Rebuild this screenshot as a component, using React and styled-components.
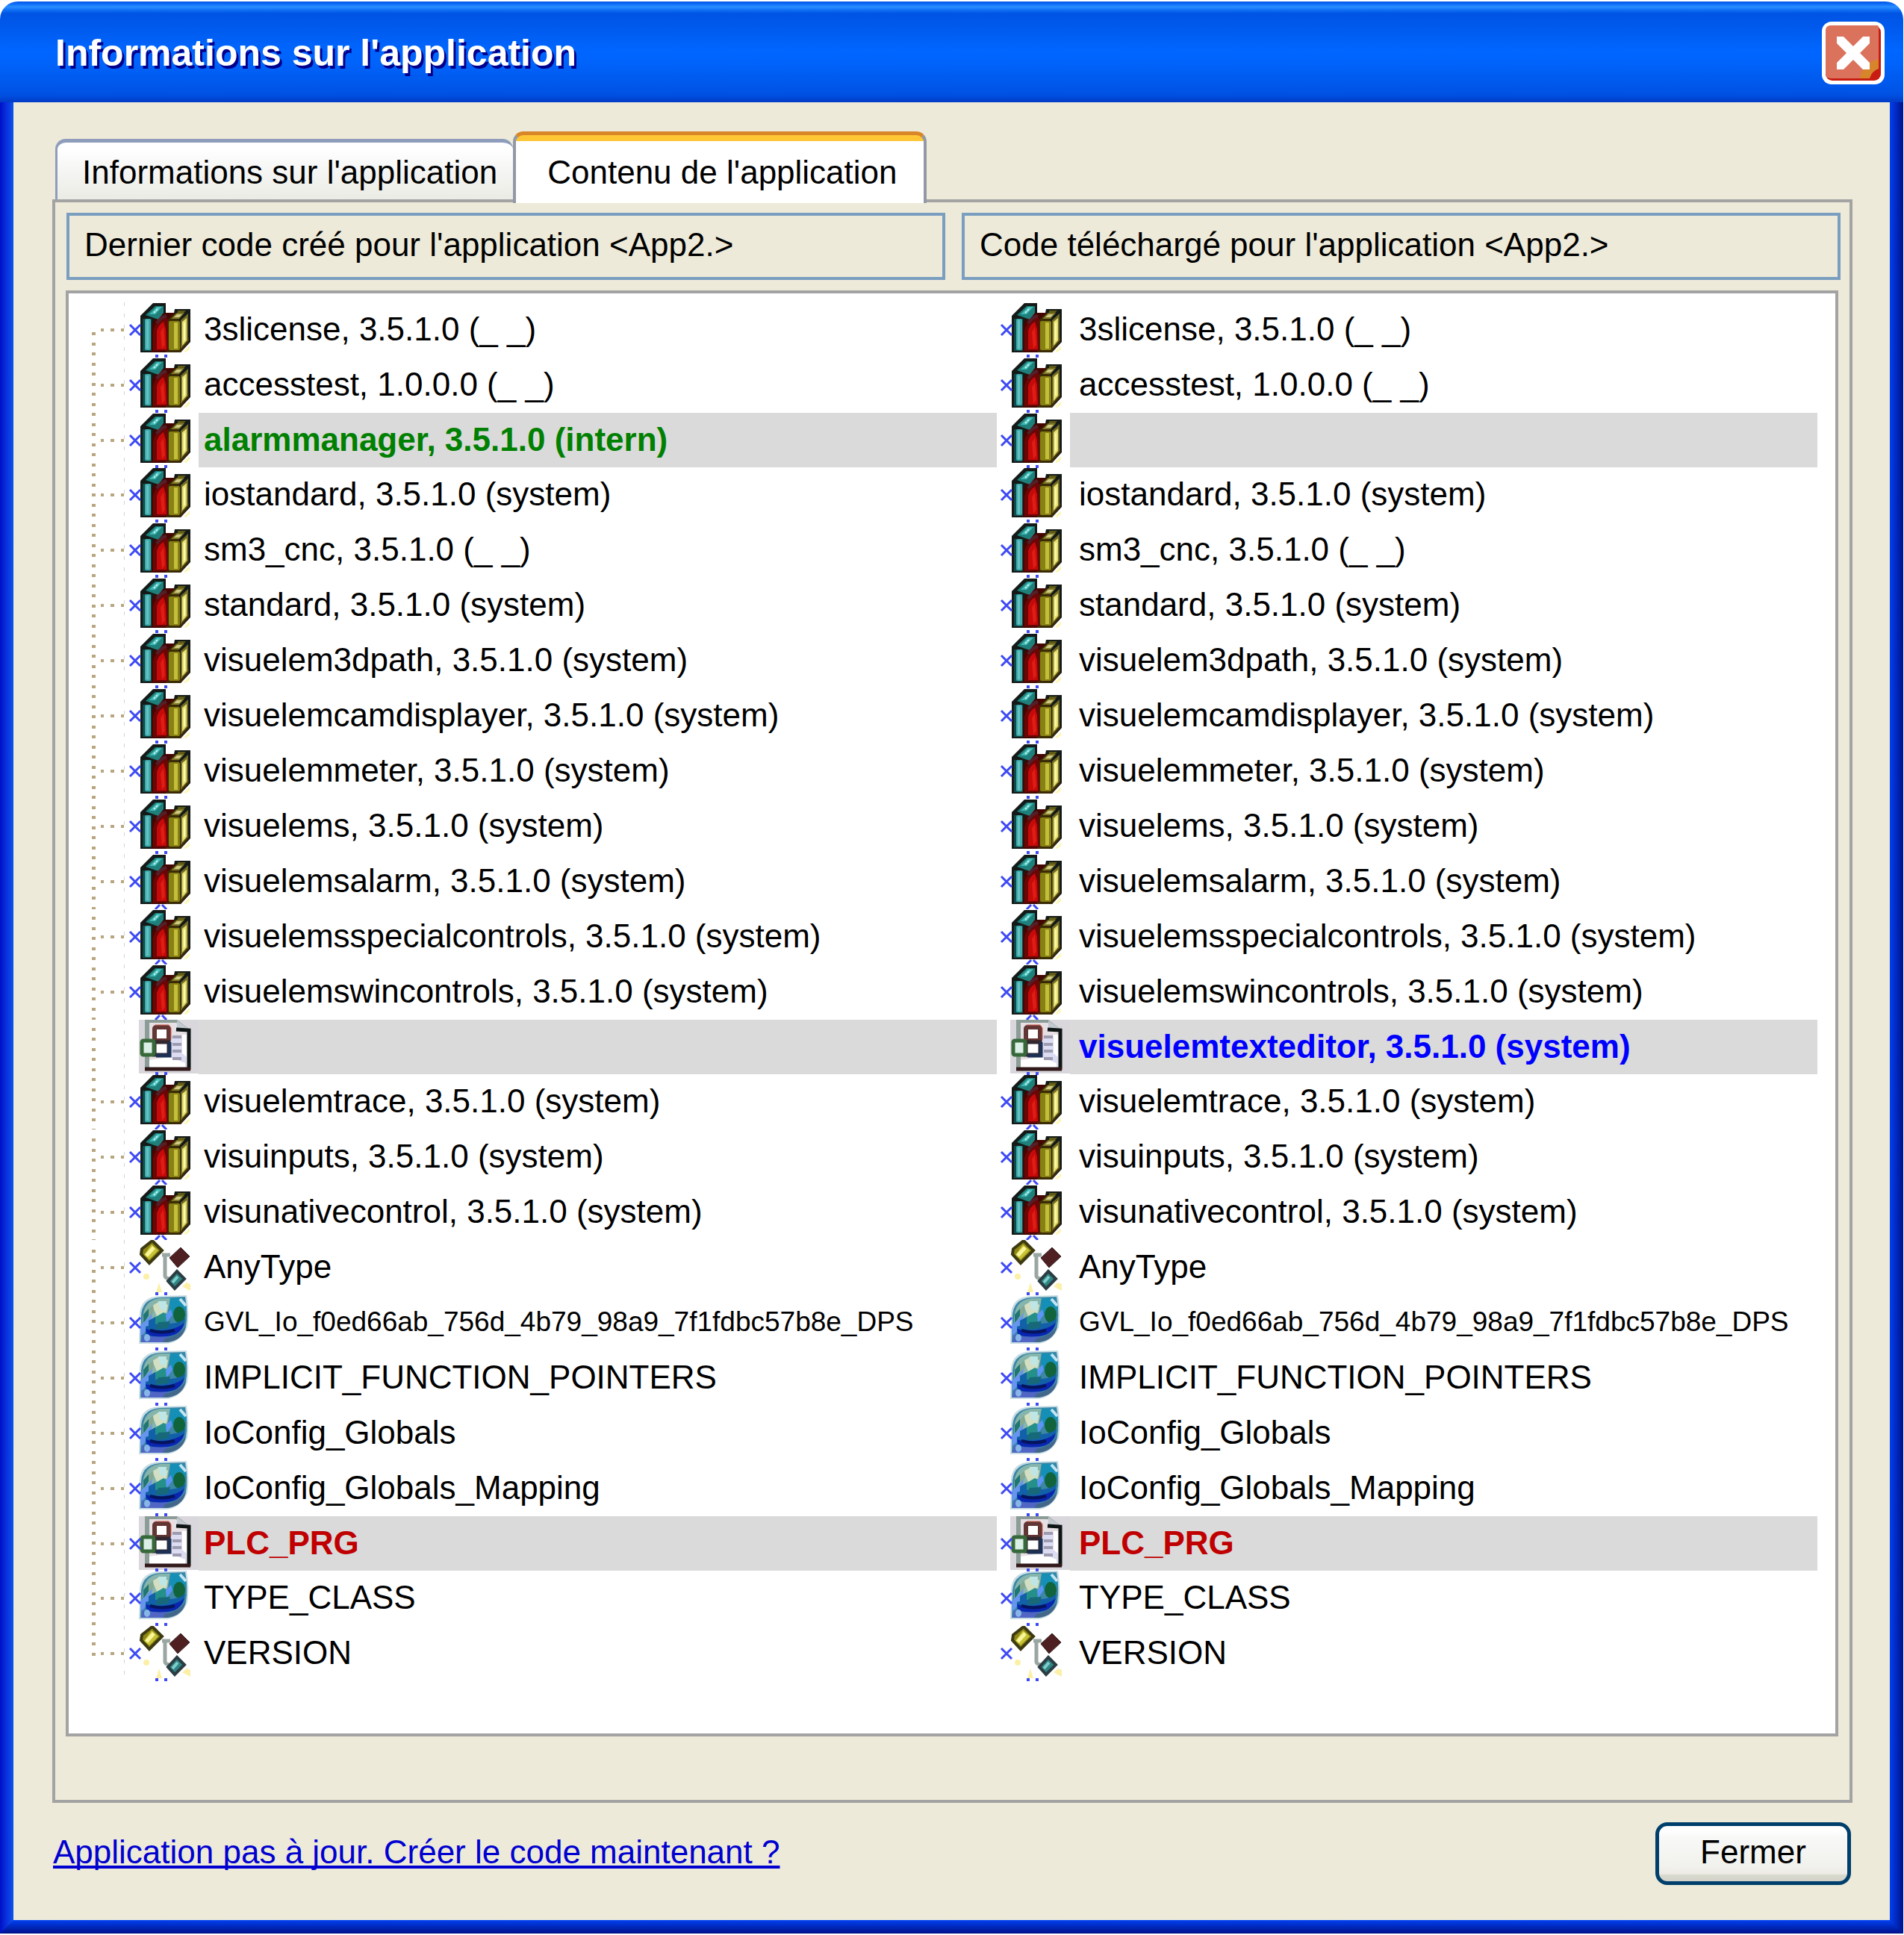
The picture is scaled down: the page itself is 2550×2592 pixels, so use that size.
import React from 'react';
import styled, { createGlobalStyle } from 'styled-components';

const FONT = '"Liberation Sans", Arial, sans-serif';
const ROW = 74;
const MARKED_ROW = 73;

const GlobalStyle = createGlobalStyle`
  *, *::before, *::after { box-sizing: border-box; }
  body { margin: 0; background: #ffffff; font-family: ${FONT}; color: #000000; }
  button { font-family: inherit; color: inherit; }
`;

const Screen = styled.div`
  min-height: 100vh;
  padding: 2px 1px 2px 0;
  display: flex;
`;

const Dialog = styled.main`
  flex: 1;
  min-width: 0;
  display: flex;
  flex-direction: column;
`;

const TitleBar = styled.header`
  height: 135px;
  display: flex;
  align-items: center;
  justify-content: space-between;
  padding: 2px 25px 0 74px;
  border-radius: 24px 24px 0 0;
  background: linear-gradient(
    to bottom,
    #0055e4 0,
    #1272fb 4px,
    #2a8fff 7px,
    #1272f6 11px,
    #0054e4 16px,
    #0058ea 30px,
    #0066ff 66px,
    #0064fc 80px,
    #0054e6 120px,
    #004fe0 126px,
    #003bc6 135px
  );
`;

const Title = styled.h1`
  margin: 0;
  font-size: 50px;
  line-height: 60px;
  font-weight: 700;
  color: #ffffff;
  text-shadow: 3px 4px 0 #00008c;
`;

const CloseButton = styled.button`
  width: 84px;
  height: 84px;
  padding: 0;
  border: 0;
  background: none;
  display: block;
`;

const Frame = styled.div`
  flex: 1;
  display: grid;
  grid-template-columns: 18px minmax(0, 1fr) 18px;
  grid-template-rows: 1fr 18px;
`;

const LeftEdge = styled.div`
  grid-area: 1 / 1 / 3 / 2;
  background: linear-gradient(to right, #0010c4, #0a2edc 45%, #0b55ea);
`;

const RightEdge = styled.div`
  grid-area: 1 / 3 / 3 / 4;
  background: linear-gradient(to right, #0040f0, #0026b8 55%, #00108a);
`;

const BottomEdge = styled.div`
  grid-area: 2 / 1 / 3 / 4;
  background: linear-gradient(to bottom, #0040f0, #0026b8 55%, #00108a);
  clip-path: polygon(0 100%, 18px 0, calc(100% - 18px) 0, 100% 100%);
`;

const Body = styled.div`
  grid-area: 1 / 2 / 2 / 3;
  background: #edead9;
  padding: 39px 50px 47px 52px;
  display: flex;
  flex-direction: column;
`;

const Tabs = styled.div`
  display: flex;
  align-items: flex-end;
  height: 91px;
  padding-left: 4px;
`;

const Tab = styled.button`
  font-size: 44px;
  line-height: 52px;
  height: ${(p) => (p.$active ? 96 : 81)}px;
  margin: 0 0 ${(p) => (p.$active ? '-5px' : '0')};
  padding: ${(p) => (p.$active ? '8px 35px 0 42px' : '3px 21px 0 33px')};
  border-style: solid;
  border-width: ${(p) => (p.$active ? '5px 4px 0 4px' : '5px 0 0 3px')};
  border-color: ${(p) => (p.$active ? '#d98629 #9299a6 #ffffff #9299a6' : '#8e9dbb')};
  border-radius: 14px 14px 0 0;
  position: relative;
  z-index: 1;
  background: ${(p) =>
    p.$active
      ? 'linear-gradient(to bottom, #ffc636 8px, #ffffff 8px)'
      : 'linear-gradient(to bottom, #ffffff 8px, #f5f5f4 50%, #eff0ea 80%, #ebebe6)'};
`;

const Panel = styled.section`
  border: 4px solid #a3a3a3;
  padding: 14px 15px 85px 14px;
`;

const Headings = styled.div`
  display: grid;
  grid-template-columns: 1fr 1fr;
  gap: 22px;
  margin: 0 -3px 14px 1px;
`;

const Heading = styled.h2`
  margin: 0;
  height: 90px;
  display: flex;
  align-items: center;
  padding: 0 20px 5px;
  border: 4px solid #7a9ebf;
  font-size: 44px;
  line-height: 52px;
  font-weight: 400;
`;

const Tree = styled.ul`
  list-style: none;
  margin: 0;
  padding: 12px 24px 70px 0;
  border: 4px solid #a3a3a3;
  background: #ffffff;
`;

const Row = styled.li`
  display: grid;
  grid-template-columns: 174px minmax(0, 1069fr) 98px minmax(0, 1001fr);
  height: ${(p) => p.$height}px;
`;

const Marks = styled.div`
  display: flex;
  padding-left: ${(p) => p.$indent || 0}px;
`;

const TONES = { added: '#008000', removed: '#0000ff', changed: '#c00000' };

const Name = styled.span`
  height: ${MARKED_ROW}px;
  padding-left: ${(p) => p.$pad}px;
  font-size: ${(p) => (p.$long ? 37 : 44)}px;
  line-height: 72px;
  white-space: nowrap;
  font-weight: ${(p) => (p.$tone ? 700 : 400)};
  color: ${(p) => TONES[p.$tone] || '#000000'};
  background: ${(p) => (p.$tone ? '#dadada' : 'none')};
`;

const Footer = styled.footer`
  display: flex;
  align-items: center;
  justify-content: space-between;
  margin-top: 26px;
`;

const BuildLink = styled.a`
  font-size: 44px;
  line-height: 52px;
  padding: 0 0 4px 1px;
  color: #0000d0;
  text-decoration: underline;
  text-decoration-thickness: 4px;
  text-underline-offset: 3px;
  text-decoration-skip-ink: none;
`;

const CloseDialogButton = styled.button`
  width: 262px;
  height: 84px;
  margin-right: 2px;
  padding: 0 0 4px;
  border: 5px solid #003f6b;
  border-radius: 16px;
  font-size: 44px;
  line-height: 52px;
  background: linear-gradient(
    to bottom,
    #ffffff 6px,
    #f8f8f7 16px,
    #f1f1ed 54px,
    #eeebe6 64px,
    #d8d9cd 66px,
    #d3d2ca 74px
  );
`;

function CloseGlyph() {
  return (
    <svg width="84" height="84" viewBox="0 0 84 84" aria-hidden="true">
      <rect width="84" height="84" rx="13" fill="#ffffff" />
      <rect x="5" y="5" width="74" height="74" rx="9" fill="#c81c12" />
      <path d="M12 5h62q2 0 2 2v69H12q-7 0-7-7V12q0-7 7-7z" fill="#db725c" />
      <path d="M51 76q1-9 8-16 7-8 17-10v13q-9 3-12 13z" fill="#d6852a" />
      <path d="M64 76q3-10 12-13v13z" fill="#c81c12" />
      <path
        d="M20 20h9l13 13 13-13h9v9L51 42l13 13v9h-9L42 51 29 64h-9v-9l13-13-13-13z"
        fill="#ffffff"
      />
    </svg>
  );
}

function Guides({ top, branch, last }) {
  const dots = [];
  for (let k = 0; k < 132; k += 1) {
    const y = Math.round(52 + k * 13.5) - top;
    if (y >= 0 && y < ROW && !(last && y > 37)) dots.push(y);
  }
  return (
    <svg width="80" height="74" viewBox="0 0 80 74" aria-hidden="true">
      <g fill="#b8a67f">
        {dots.map((y) => (
          <rect key={y} x="31" y={y} width="5" height="4" />
        ))}
        {branch && <path d="M43 35h4v4h-4zM56 35h5v4h-5zM70 35h4v4h-4z" />}
      </g>
      <path d="M74.500 0v74" stroke="#d3d1dc" strokeDasharray="5 10" />
    </svg>
  );
}

function Books() {
  return (
    <g>
      <path d="M16 67V18L33 1h17v13h11l1-5h21v44L70 67z" fill="#141a17" />
      <path d="M31 67V30q6-14 20-16h10l6 8v45z" fill="#450500" />
      <path d="M53 23l10-9 12-1-7 9v34l13-9v6L70 67H50z" fill="#3a2a06" />
      <path d="M23 17L36 5h11v9l-7 9z" fill="#1f7f7b" />
      <path d="M28 16L38 6h7l-9 10z" fill="#3fb9b4" />
      <path d="M34 14l6-6" stroke="#c9f5ee" strokeWidth="2" strokeDasharray="3 1" />
      <rect x="19" y="22" width="12" height="43" fill="#104c4c" />
      <rect x="22" y="22" width="8" height="42" rx="2" fill="#3eaaab" />
      <rect x="24" y="24" width="3" height="38" fill="#66c1c0" />
      <path d="M33 65V38q2-11 16-20l4 5v42z" fill="#6b0606" />
      <path d="M36 27q5-8 14-11l2 4q-8 2-12 9z" fill="#53202a" />
      <path d="M38 63V38q3-9 9-12l3 10 1 27z" fill="#c60a0a" />
      <path d="M43 40l4-7 2 24-4 5z" fill="#de1d14" />
      <rect x="54" y="25" width="15" height="39" rx="2" fill="#878012" />
      <rect x="61" y="27" width="5" height="35" fill="#c4be3c" />
      <path d="M57 22l8-8h10l-7 8z" fill="#7f7826" />
      <path d="M61 20l4-4h7l-4 4z" fill="#cfcb86" />
      <path d="M66 11h11l-3 3h-8z" fill="#5f5a14" />
      <path d="M70 24l10-9v36l-10 11z" fill="#746b24" />
      <path d="M72 26l6-5v30l-6 7z" fill="#e4e070" />
      <path d="M74 28l2-2v24l-2 2z" fill="#fbf9b8" />
      <path d="M74 66l8-8v5l-5 4z" fill="#fcf7b6" />
    </g>
  );
}

function Page() {
  return (
    <g>
      <rect x="14" y="-1" width="80" height="73" fill="#d9d7dc" />
      <path d="M22 0h43l18 14v54H22z" fill="#8c9c96" />
      <path d="M28 4h36l15 12v48H28z" fill="#e6e0e4" />
      <path d="M50 22h27v42H52z" fill="#dcdcf3" />
      <path d="M28 54l28-4 20 8v6H28z" fill="#ffffff" />
      <path d="M72 20h6v30l-6-5z" fill="#ffffff" />
      <path d="M65 1l18 13-18-1z" fill="#c3c9d2" />
      <path d="M64 13l17 1v53" fill="none" stroke="#0f1514" strokeWidth="5" />
      <path d="M22 66h61" stroke="#32191a" strokeWidth="5" />
      <rect x="35" y="10" width="19" height="18" rx="2" fill="#ffffff" stroke="#613634" strokeWidth="6" />
      <path d="M36 7h18l3 4v15" fill="none" stroke="#d4604e" strokeWidth="1" />
      <rect x="35" y="30" width="19" height="17" fill="#ffffff" stroke="#32272f" strokeWidth="5" />
      <path d="M37 48h18V30" fill="none" stroke="#1c3053" strokeWidth="5" />
      <rect x="18" y="28" width="16" height="19" rx="2" fill="#dcefe6" stroke="#376839" strokeWidth="5" />
      <path d="M59 23h12M59 33h12M59 42h12M59 52h12" stroke="#9d9cb0" strokeWidth="4" />
    </g>
  );
}

function DataType() {
  return (
    <g>
      <path d="M45 20h11M49 20v28q0 3 6 4" fill="none" stroke="#9aa6a2" strokeWidth="5" />
      <path d="M32 1l13 13-17 17-11-12 1-7z" fill="#8d8717" stroke="#3d3a12" strokeWidth="4" />
      <path d="M31 6l9 8-12 12-7-6z" fill="#c9c334" />
      <path d="M24 21l10-11" stroke="#f8f69a" strokeWidth="5" />
      <path d="M70 10l12 12-16 15-11-13z" fill="#4f2022" stroke="#33201f" strokeWidth="1" />
      <path d="M65 42l10 10-13 13-9-10z" fill="#2f8585" stroke="#2b3d42" strokeWidth="4" />
      <path d="M59 57l7-8" stroke="#7fcdc9" strokeWidth="4" />
      <circle cx="24" cy="49" r="4" fill="#fcf0a8" />
      <path d="M41 57l4 13h-8zM72 62l6-5 5 2v9l-6-3z" fill="#fcf0a8" />
    </g>
  );
}

function Globe() {
  return (
    <g>
      <path d="M14 65l1-31Q12 2 42 1l36-1q4 24 1 43-9 20-28 22z" fill="#c6dde4" />
      <path d="M16 63l1-29Q15 5 42 3l34-1q4 22 1 40-8 19-27 21z" fill="#3c86a6" />
      <path d="M19 34Q19 7 42 4h14l-4 22-12 10-20 8z" fill="#86b5ac" />
      <path d="M32 14l10-6 11 5-2 10-13 5z" fill="#d2dfc2" />
      <path d="M40 8h11l-1 13-8-3z" fill="#bfe6e6" />
      <path d="M56 4h17l5 14-13 14-10-10z" fill="#168fb6" />
      <path d="M20 26l7-8 1 8-8 12z" fill="#1f7672" />
      <path d="M27 19l6-6 1 9-7 8z" fill="#84a891" />
      <path d="M35 30l12-7 9 5-5 11-16 4z" fill="#25908a" />
      <path d="M50 26l7-7 2 7-8 11z" fill="#5d95f4" />
      <path d="M16 40l8-7 8-9-2 14-10 14-4 2z" fill="#6695ec" />
      <ellipse cx="68" cy="26" rx="8" ry="11" fill="#11633b" />
      <path d="M27 34l9-5v10l-9 8z" fill="#1260a8" />
      <path d="M23 42q18-5 34-4 12-1 19-7-1 14-14 22-20 8-39 0z" fill="#1260a8" />
      <path d="M23 45q12 4 24 2 17-1 28-10-3 12-14 16-18 5-36 0z" fill="#0a25b0" />
      <path d="M40 36l16-1-3 9-17 2z" fill="#17697a" />
      <path d="M29 47q16 5 33 0" fill="none" stroke="#06145c" strokeWidth="4" />
      <path d="M19 53q16 4 35 2l-7 8H17z" fill="#5065c4" />
      <path d="M49 58q19-4 28-16-4 18-24 21h-7z" fill="#42678b" />
      <ellipse cx="25" cy="57" rx="4" ry="5" fill="#87b6e8" />
      <path d="M69 5l8 9" stroke="#c5e4f2" strokeWidth="4" />
    </g>
  );
}

const ICONS = { lib: Books, pou: Page, type: DataType, gvl: Globe };

function NodeMarks({ kind, cross, caret }) {
  const Icon = ICONS[kind];
  return (
    <svg width="94" height="74" viewBox="0 0 94 74" aria-hidden="true">
      <Icon />
      {cross && <path d="M2 30l14 14M2 44l14-14" stroke="#3d49f5" strokeWidth="3" />}
      {caret ? (
        <path d="M36 74l6-6M51 74l-6-6" stroke="#3d49f5" strokeWidth="3" />
      ) : (
        <path d="M36 72h4M48 72h4" stroke="#3d49f5" strokeWidth="4" />
      )}
    </svg>
  );
}

const ROWS = [
  { kind: 'lib', name: '3slicense, 3.5.1.0 (_ _)' },
  { kind: 'lib', name: 'accesstest, 1.0.0.0 (_ _)' },
  { kind: 'lib', left: 'alarmmanager, 3.5.1.0 (intern)', right: '', tone: 'added' },
  { kind: 'lib', name: 'iostandard, 3.5.1.0 (system)' },
  { kind: 'lib', name: 'sm3_cnc, 3.5.1.0 (_ _)' },
  { kind: 'lib', name: 'standard, 3.5.1.0 (system)' },
  { kind: 'lib', name: 'visuelem3dpath, 3.5.1.0 (system)' },
  { kind: 'lib', name: 'visuelemcamdisplayer, 3.5.1.0 (system)' },
  { kind: 'lib', name: 'visuelemmeter, 3.5.1.0 (system)' },
  { kind: 'lib', name: 'visuelems, 3.5.1.0 (system)' },
  { kind: 'lib', name: 'visuelemsalarm, 3.5.1.0 (system)', caret: true },
  { kind: 'lib', name: 'visuelemsspecialcontrols, 3.5.1.0 (system)', caret: true },
  { kind: 'lib', name: 'visuelemswincontrols, 3.5.1.0 (system)', caret: true },
  { kind: 'pou', left: '', right: 'visuelemtexteditor, 3.5.1.0 (system)', tone: 'removed', unlinked: true },
  { kind: 'lib', name: 'visuelemtrace, 3.5.1.0 (system)', caret: true },
  { kind: 'lib', name: 'visuinputs, 3.5.1.0 (system)', caret: true },
  { kind: 'lib', name: 'visunativecontrol, 3.5.1.0 (system)', caret: true },
  { kind: 'type', name: 'AnyType' },
  { kind: 'gvl', name: 'GVL_Io_f0ed66ab_756d_4b79_98a9_7f1fdbc57b8e_DPS', long: true },
  { kind: 'gvl', name: 'IMPLICIT_FUNCTION_POINTERS' },
  { kind: 'gvl', name: 'IoConfig_Globals' },
  { kind: 'gvl', name: 'IoConfig_Globals_Mapping' },
  { kind: 'pou', name: 'PLC_PRG', tone: 'changed' },
  { kind: 'gvl', name: 'TYPE_CLASS' },
  { kind: 'type', name: 'VERSION' },
];

const rowHeight = (row) => (row.tone ? MARKED_ROW : ROW);

const rowTop = (index) => ROWS.slice(0, index).reduce((sum, row) => sum + rowHeight(row), 12);

function TreeRow({ row, index }) {
  const marks = <NodeMarks kind={row.kind} cross={!row.unlinked} caret={row.caret} />;
  return (
    <Row $height={rowHeight(row)}>
      <Marks>
        <Guides top={rowTop(index)} branch={!row.unlinked} last={index === ROWS.length - 1} />
        {marks}
      </Marks>
      <Name $pad={7} $tone={row.tone} $long={row.long}>
        {row.left ?? row.name}
      </Name>
      <Marks $indent={4}>{marks}</Marks>
      <Name $pad={12} $tone={row.tone} $long={row.long}>
        {row.right ?? row.name}
      </Name>
    </Row>
  );
}

export default function App() {
  return (
    <Screen>
      <GlobalStyle />
      <Dialog>
        <TitleBar>
          <Title>Informations sur l'application</Title>
          <CloseButton type="button" aria-label="Fermer la fenêtre">
            <CloseGlyph />
          </CloseButton>
        </TitleBar>
        <Frame>
          <LeftEdge />
          <RightEdge />
          <BottomEdge />
          <Body>
            <Tabs role="tablist">
              <Tab type="button" role="tab" aria-selected="false">
                Informations sur l'application
              </Tab>
              <Tab type="button" role="tab" aria-selected="true" $active>
                Contenu de l'application
              </Tab>
            </Tabs>
            <Panel role="tabpanel">
              <Headings>
                <Heading>Dernier code créé pour l'application &lt;App2.&gt;</Heading>
                <Heading>Code téléchargé pour l'application &lt;App2.&gt;</Heading>
              </Headings>
              <Tree>
                {ROWS.map((row, i) => (
                  <TreeRow key={i} row={row} index={i} />
                ))}
              </Tree>
            </Panel>
            <Footer>
              <BuildLink href="#">Application pas à jour. Créer le code maintenant ?</BuildLink>
              <CloseDialogButton type="button">Fermer</CloseDialogButton>
            </Footer>
          </Body>
        </Frame>
      </Dialog>
    </Screen>
  );
}
